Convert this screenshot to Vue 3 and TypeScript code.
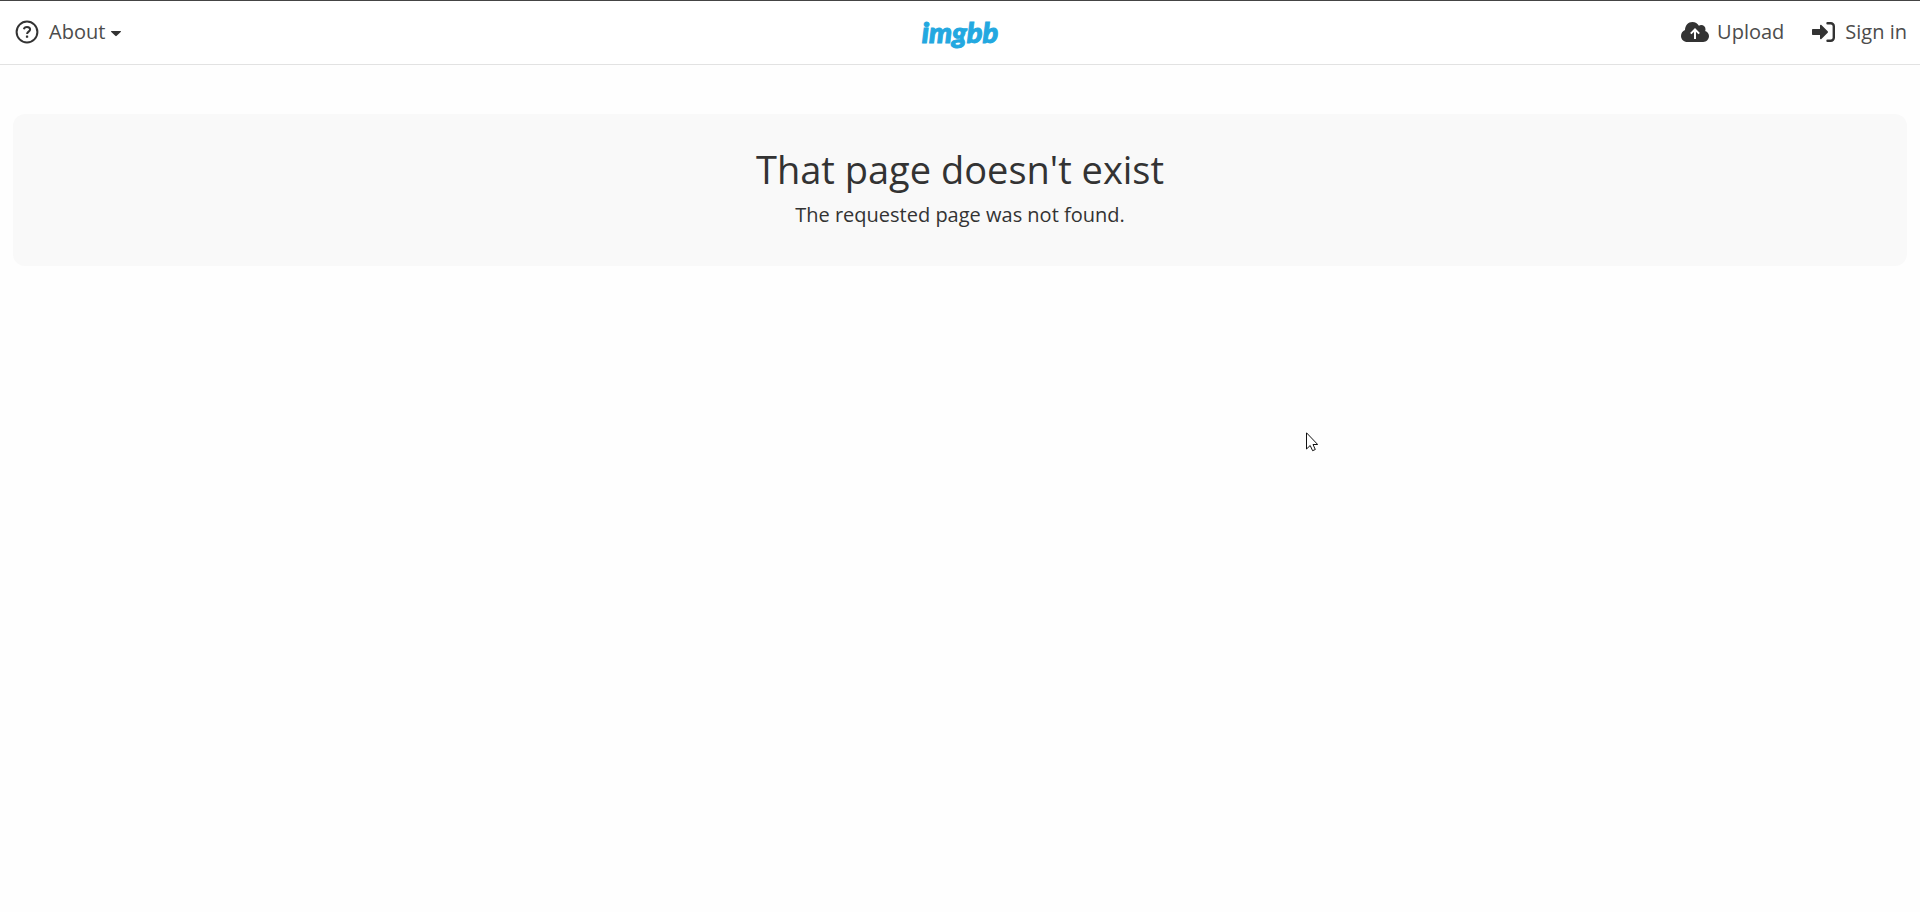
<script setup lang="ts">
const title: string = "That page doesn't exist"
const message: string = 'The requested page was not found.'
</script>

<template>
  <div class="page">
    <header class="top-bar">
      <nav class="side">
        <button type="button" class="item about">
          <svg class="help" viewBox="0 0 24 24" aria-hidden="true">
            <circle cx="12" cy="12" r="10.4" fill="none" stroke="currentColor" stroke-width="2" />
            <path d="M8.9 9.3C9.2 7.7 10.4 7 12 7c1.800 0 3.100 1 3.100 2.500 0 2-3 2.300-3 4.400" fill="none" stroke="currentColor" stroke-width="2" />
            <rect x="10.900" y="15.500" width="2.300" height="2.300" rx="0.500" fill="currentColor" />
          </svg>
          <span>About</span>
          <svg class="caret" viewBox="0 0 10 6" aria-hidden="true"><path d="M0.600 0h8.800c.6 0 .7.500.3.900L5.700 4.800a1 1 0 0 1-1.400 0L.3.900C-.1.500 0 0 .6 0z" fill="currentColor" /></svg>
        </button>
      </nav>
      <a href="#" class="logo">imgbb</a>
      <nav class="side end">
        <a href="#" class="item">
          <svg class="cloud" viewBox="0 0 28 20" aria-hidden="true">
            <path d="M6.500 20C2.800 20 0 17.400 0 14c0-2.700 1.600-4.900 4-5.900C4 3.500 7.200 0 11.400 0c2.900 0 5.200 1.400 6.500 3.700.7-.5 1.500-.7 2.300-.7 2.500 0 4.300 1.900 4.300 4.300 0 .6-.1 1.100-.3 1.600 2.300.7 3.800 2.700 3.800 5.200 0 3.300-2.500 5.900-5.800 5.900z" fill="currentColor" />
            <path d="M14 17V8M9.800 11.600L14 7.500l4.200 4.100" fill="none" stroke="#fff" stroke-width="2" />
          </svg>
          <span>Upload</span>
        </a>
        <a href="#" class="item">
          <svg class="enter" viewBox="0 0 23 20" aria-hidden="true">
            <path d="M1 7h7V3.600c0-.8.8-1.100 1.400-.6l6.300 6.300c.4.400.4 1 0 1.400L9.400 17c-.6.500-1.400.2-1.400-.6V13H1c-.6 0-1-.4-1-1V8c0-.6.4-1 1-1z" fill="currentColor" />
            <path d="M15.500 1.300h3.300A3 3 0 0 1 21.800 4.300v11.400a3 3 0 0 1-3 3H15.500" fill="none" stroke="currentColor" stroke-width="2.400" stroke-linecap="round" />
          </svg>
          <span>Sign in</span>
        </a>
      </nav>
    </header>
    <main class="content">
      <section class="notice">
        <h1>{{ title }}</h1>
        <p>{{ message }}</p>
      </section>
    </main>
    <svg class="pointer" viewBox="0 0 12 20" aria-hidden="true">
      <path d="M.5.800v16.200l3.700-3.500 2.400 5.200 2.700-1.200-2.300-5h4.700z" fill="#fff" stroke="#111" stroke-width="1" />
    </svg>
  </div>
</template>

<style>
body {
  margin: 0;
  background: #fefefe;
}
</style>

<style scoped>
.page {
  position: relative;
  min-height: 100vh;
  box-sizing: border-box;
  border-top: 1px solid #444;
  color: #333;
  font-family: "Open Sans", sans-serif;
  font-size: 20px;
}
.top-bar {
  display: flex;
  align-items: center;
  min-height: 61px;
  padding: 0 13px 2px;
  background: #fff;
  border-bottom: 1px solid #e2e2e2;
}
.side {
  flex: 1;
  display: flex;
}
.end {
  justify-content: flex-end;
  gap: 28px;
}
.item {
  display: flex;
  align-items: center;
  gap: 8px;
  padding: 0;
  border: 0;
  background: none;
  color: #333;
  font: inherit;
  line-height: 28px;
  text-decoration: none;
  cursor: pointer;
}
.item span {
  color: #4c4c4c;
}
.about {
  gap: 6px;
  padding-left: 2px;
}
.help {
  width: 24px;
  height: 24px;
  margin-right: 4px;
}
.caret {
  width: 10px;
  height: 6px;
  margin-top: 4px;
}
.cloud {
  width: 28px;
  height: 20px;
}
.enter {
  width: 23px;
  height: 20px;
  margin-right: 2px;
}
.logo {
  color: #23a8e0;
  font-family: Lato, sans-serif;
  font-size: 29px;
  font-style: italic;
  font-weight: 900;
  line-height: 36px;
  text-decoration: none;
  -webkit-text-stroke: 1px #23a8e0;
}
.content {
  padding: 49px 13px;
}
.notice {
  padding: 27px 20px 35px;
  border-radius: 12px;
  background: #f9f9f9;
  text-align: center;
}
h1 {
  margin: 0 0 2px;
  font-size: 38px;
  font-weight: 400;
  line-height: 56px;
}
p {
  margin: 0;
  line-height: 32px;
}
.pointer {
  position: absolute;
  left: 68%;
  top: 431px;
  width: 12px;
  height: 20px;
}
</style>
